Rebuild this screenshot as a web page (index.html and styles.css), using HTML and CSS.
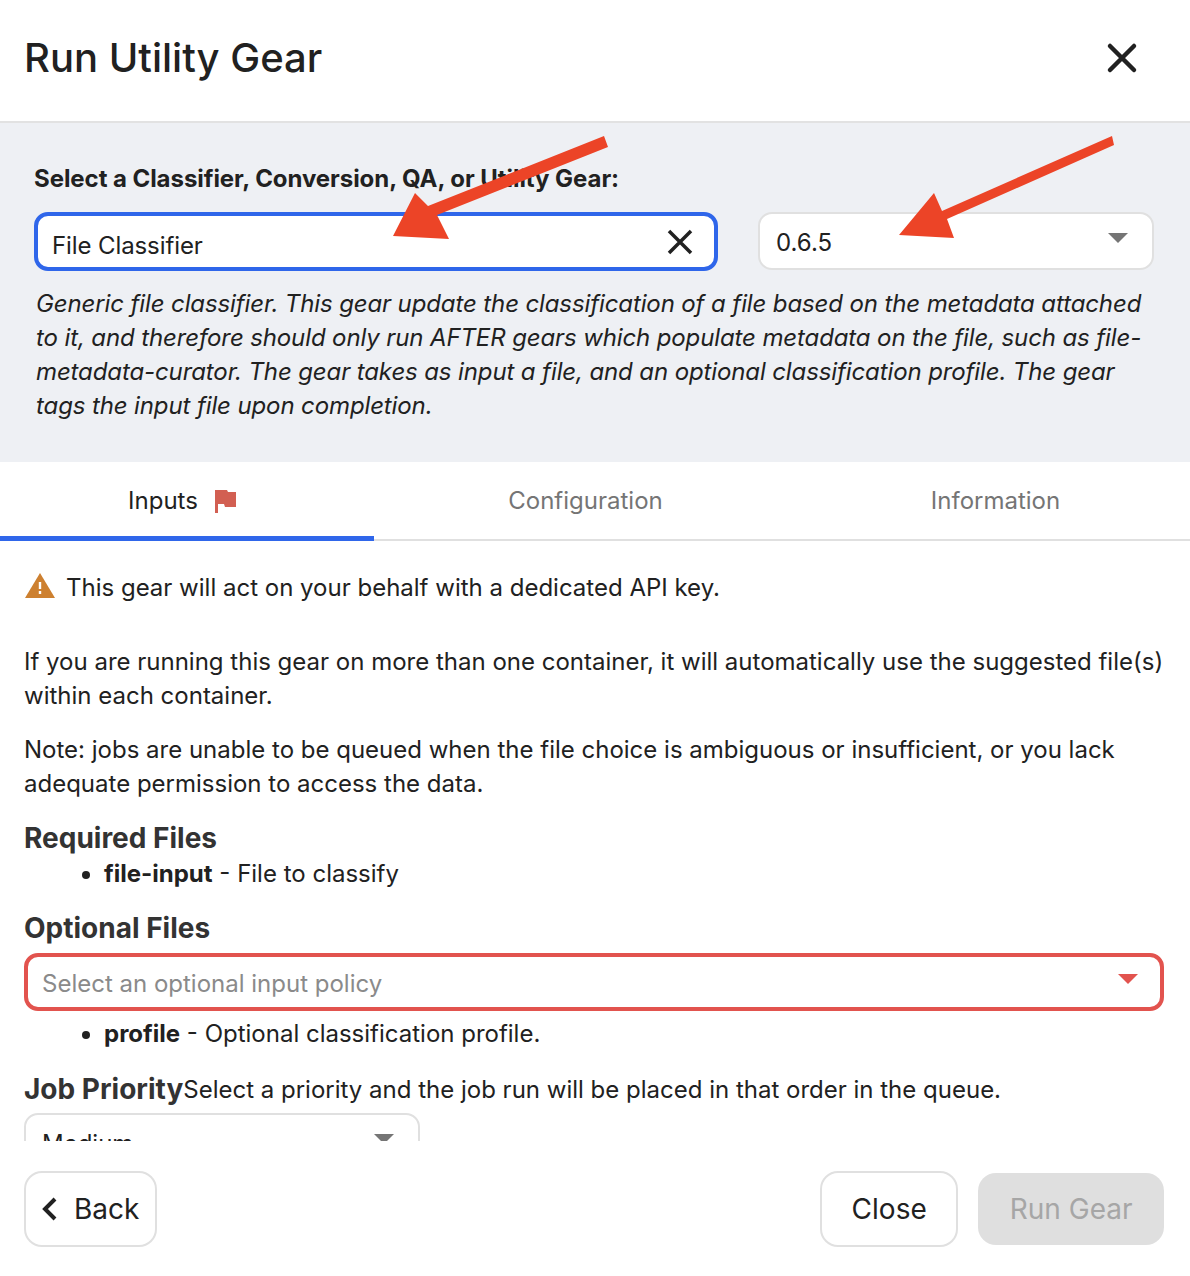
FILE: index.html
```html
<!DOCTYPE html>
<html lang="en">
<head>
    <meta charset="UTF-8">
    <meta name="viewport" content="width=device-width, initial-scale=1.0">
    <title>Run Utility Gear</title>
    <link rel="stylesheet" href="styles.css">
</head>
<body>

<div class="modal">
    <div class="modal-header">
        <h1>Run Utility Gear</h1>
        <svg class="close-icon" width="32" height="32" viewBox="0 0 32 32"><path d="M4 4L28 28M28 4L4 28" /></svg>
    </div>

    <div class="gear-select">
        <label class="gear-label">Select a Classifier, Conversion, QA, or Utility Gear:</label>
        <div class="gear-row">
            <div class="field field-focus">
                <span class="field-text">File Classifier</span>
                <svg class="clear-icon" width="26" height="26" viewBox="0 0 26 26"><path d="M2 2L24 24M24 2L2 24" /></svg>
            </div>
            <div class="field field-version">
                <span class="field-text">0.6.5</span>
                <span class="caret"></span>
            </div>
        </div>
        <p class="gear-desc">Generic file classifier. This gear update the classification of a file based on the metadata attached to it, and therefore should only run AFTER gears which populate metadata on the file, such as file-metadata-curator. The gear takes as input a file, and an optional classification profile. The gear tags the input file upon completion.</p>
    </div>

    <div class="tabs">
        <div class="tab tab-active">
            Inputs
            <svg class="flag-icon" width="21" height="23" viewBox="0 0 21 23"><path d="M0 0H12L13 2H21V17H10L9 14H3V23H0Z" /></svg>
        </div>
        <div class="tab">Configuration</div>
        <div class="tab tab-info">Information</div>
    </div>

    <div class="modal-body">
        <div class="warning">
            <svg width="30" height="25" viewBox="0 0 30 25"><path class="warn-bg" d="M15 0L30 25H0Z" /><path class="warn-mark" d="M13.8 9H16.2V16H13.8ZM13.8 18H16.2V21H13.8Z" /></svg>
            <span>This gear will act on your behalf with a dedicated API key.</span>
        </div>
        <p class="para">If you are running this gear on more than one container, it will automatically use the suggested file(s) within each container.</p>
        <p class="para para-note">Note: jobs are unable to be queued when the file choice is ambiguous or insufficient, or you lack adequate permission to access the data.</p>

        <h3 class="section-title">Required Files</h3>
        <ul class="file-list">
            <li><b>file-input</b> - File to classify</li>
        </ul>

        <h3 class="section-title">Optional Files</h3>
        <div class="field field-error">
            <span class="field-text">Select an optional input policy</span>
            <span class="caret caret-red"></span>
        </div>
        <ul class="file-list file-list-profile">
            <li><b>profile</b> - Optional classification profile.</li>
        </ul>

        <div class="priority-head">
            <h3 class="section-title">Job Priority</h3>
            <span class="priority-hint">Select a priority and the job run will be placed in that order in the queue.</span>
        </div>
        <div class="field field-priority">
            <span class="field-text">Medium</span>
            <span class="caret"></span>
        </div>
    </div>

    <div class="modal-footer">
        <button class="button button-back">
            <svg width="18" height="24" viewBox="0 0 18 24"><path d="M15 2L5 12L15 22" /></svg>
            Back
        </button>
        <div class="footer-right">
            <button class="button button-close">Close</button>
            <button class="button button-disabled">Run Gear</button>
        </div>
    </div>

    <!-- annotation arrows pasted over the screenshot -->
    <svg class="arrows" width="1190" height="1276" viewBox="0 0 1190 1276">
        <path d="M393 236L415 193L428 206L604 136L608 147L437 215L449 239Z" />
        <path d="M899 235L934 193L942 211L1112 136L1114 145L947 219L954 238Z" />
    </svg>
</div>

</body>
</html>
```

FILE: styles.css
```css
* {
    box-sizing: border-box;
}

body {
    margin: 0;
    font-family: 'Inter', sans-serif;
    font-size: 24px;
    line-height: 34px;
    color: #212121;
    background-color: #fff;
}

.modal {
    position: relative;
    width: 1190px;
    height: 1276px;
    display: flex;
    flex-direction: column;
    overflow: hidden;
}

.modal-header {
    height: 123px;
    flex: none;
    display: flex;
    justify-content: space-between;
    align-items: center;
    padding: 0 52px 5px 24px;
    border-bottom: 2px solid #e2e2e2;
}

.modal-header h1 {
    margin: 0;
    font-size: 40px;
    font-weight: 500;
    line-height: 48px;
}

.close-icon path {
    fill: none;
    stroke: #212121;
    stroke-width: 4.5;
    stroke-linecap: round;
}

.gear-select {
    height: 339px;
    flex: none;
    padding: 39px 34px 0 34px;
    background-color: #eef0f4;
}

.gear-label {
    display: block;
    font-size: 24px;
    font-weight: 700;
    height: 34px;
    letter-spacing: -0.06px;
}

.gear-row {
    display: flex;
    gap: 40px;
    margin-top: 16px;
    padding-right: 2px;
}

.field {
    display: flex;
    justify-content: space-between;
    align-items: center;
    height: 58px;
    padding: 0 16px;
    background-color: #fff;
    border: 2px solid #e0e0e0;
    border-radius: 14px;
}

.field-text {
    padding-top: 4px;
}

.field-focus {
    width: 684px;
    height: 59px;
    flex: none;
    padding: 0 21px 0 14px;
    border: 4px solid #2f66ea;
}

.field-focus .field-text {
    padding-top: 8px;
    letter-spacing: -0.1px;
}

.clear-icon path {
    fill: none;
    stroke: #212121;
    stroke-width: 3.5;
}

.field-version {
    flex: 1;
    padding: 0 24px 0 16px;
}

.caret {
    width: 0;
    height: 0;
    margin-bottom: 7px;
    border-left: 10px solid transparent;
    border-right: 10px solid transparent;
    border-top: 10px solid #757575;
}

.gear-desc {
    margin: 16px 0 0 2px;
    font-style: italic;
    font-size: 24px;
    letter-spacing: -0.12px;
}

.tabs {
    display: grid;
    grid-template-columns: 374px 423px 393px;
    height: 79px;
    flex: none;
    border-bottom: 2px solid #e0e0e0;
}

.tab {
    display: flex;
    justify-content: center;
    align-items: center;
    gap: 17px;
    padding-bottom: 2px;
    color: #757575;
}

.tab-active {
    height: 79px;
    padding: 4px 10px 0 0;
    color: #212121;
    border-bottom: 5px solid #2f66ea;
}

.tab-info {
    padding-left: 4px;
}

.flag-icon path {
    fill: #d25f52;
}

.modal-body {
    flex: 1;
    overflow: hidden;
    padding: 30px 24px 0 24px;
}

.warning {
    display: flex;
    align-items: center;
    gap: 12px;
    height: 34px;
    padding-left: 1px;
}

.warning svg {
    margin: 0 -1px 5px 0;
}

.warn-bg {
    fill: #cd8030;
}

.warn-mark {
    fill: #fff;
}

.para {
    margin: 40px 0 0 0;
}

.para-note {
    margin-top: 20px;
}

.section-title {
    margin: 20px 0 2px 0;
    font-size: 28px;
    font-weight: 700;
    line-height: 34px;
    color: #333;
}

.file-list {
    margin: 0;
    padding-left: 80px;
}

.file-list b {
    font-weight: 700;
}

.file-list-profile {
    margin-top: 6px;
}

.field-error {
    height: 58px;
    margin: 8px 2px 0 0;
    color: #8a8a8a;
    border: 4px solid #e2534e;
    padding: 0 22px 0 14px;
}

.caret-red {
    border-top-color: #e2534e;
}

.priority-head {
    display: flex;
    margin-top: 21px;
}

.priority-head .section-title {
    margin: 0 0 2px 0;
}

.priority-hint {
    padding-top: 1px;
}

.field-priority {
    width: 396px;
    margin-top: 5px;
    padding: 0 24px 0 16px;
}

.modal-footer {
    height: 135px;
    flex: none;
    display: flex;
    justify-content: space-between;
    align-items: flex-start;
    padding: 30px 26px 0 24px;
}

.footer-right {
    display: flex;
    align-items: center;
    gap: 20px;
}

.button {
    display: flex;
    align-items: center;
    height: 76px;
    padding: 0 30px;
    font-family: inherit;
    font-size: 28px;
    color: #212121;
    background-color: #fff;
    border: 2px solid #e0e0e0;
    border-radius: 18px;
}

.button-back {
    gap: 16px;
    padding: 0 16px 0 14px;
}

.button-back path {
    fill: none;
    stroke: #212121;
    stroke-width: 4;
}

.button-close {
    padding: 0 29.5px;
}

.button-disabled {
    height: 72px;
    padding: 0 31.5px;
    color: #a6a6a6;
    background-color: #dfdfdf;
    border: none;
}

.arrows {
    position: absolute;
    top: 0;
    left: 0;
    pointer-events: none;
}

.arrows path {
    fill: #ec4427;
}
```
